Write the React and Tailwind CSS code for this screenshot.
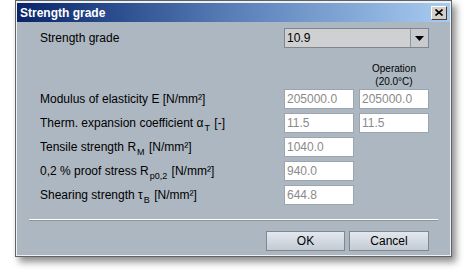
import React from "react";

const font = { fontFamily: '"Liberation Sans", Arial, sans-serif' };

function Field({ value }) {
  return (
    <div className="h-[20px] w-[70px] bg-white border border-[#9ca4ad] flex items-center pl-[2px] text-[12px] text-[#8a8a8a]">
      {value}
    </div>
  );
}

function Row({ label, values }) {
  return (
    <div className="flex items-center h-[20px]">
      <div className="w-[267px] pl-[23px] text-[12px] text-black whitespace-nowrap">{label}</div>
      <div className="flex gap-[5px]">
        {values.map((v, i) => (
          <Field key={i} value={v} />
        ))}
      </div>
    </div>
  );
}

const Sub = ({ children }) => (
  <span className="text-[9px] relative top-[4px] mx-[1px]">{children}</span>
);

export default function App() {
  return (
    <div className="w-[468px] h-[273px] bg-white relative overflow-hidden" style={font}>
      <div className="ml-[15px] w-[437px] h-[257px] border border-[#5f6368] bg-[#eef0f3] p-[1px] shadow-[4px_5px_7px_rgba(0,0,0,0.45)] flex flex-col">
        <div className="mt-[1px] h-[19px] bg-gradient-to-r from-[#0a246a] via-[#5a7fb8] to-[#a8ccf0] flex items-center justify-between pl-[3px] pr-[3px]">
          <span className="text-white font-bold text-[12px]">Strength grade</span>
          <div className="w-[16px] h-[14px] bg-[#d4d0c8] border border-t-white border-l-white border-r-[#404040] border-b-[#404040] flex items-center justify-center">
            <svg width="8" height="7" viewBox="0 0 8 7">
              <path d="M0.5 0.5 L7.5 6.5 M7.5 0.5 L0.5 6.5" stroke="black" strokeWidth="1.6" />
            </svg>
          </div>
        </div>
        <div className="flex-1 bg-[#adb7c1] flex flex-col pt-[6px]">
          <div className="flex items-center h-[20px]">
            <div className="w-[267px] pl-[23px] text-[12px] text-black">Strength grade</div>
            <div className="w-[145px] h-[20px] border border-[#7e8790] bg-[#cfd0d1] flex">
              <div className="flex-1 flex items-center pl-[2px] text-[12px] text-black">10.9</div>
              <div className="w-[18px] border-l border-[#8e969e] bg-[#c8cbce] flex items-center justify-center">
                <svg width="9" height="5" viewBox="0 0 9 5">
                  <path d="M0 0 H9 L4.5 5 Z" fill="black" />
                </svg>
              </div>
            </div>
          </div>
          <div className="h-[41px] flex">
            <div className="w-[342px]" />
            <div className="w-[70px] flex flex-col justify-end items-center text-[10px] leading-[13px] text-black pb-[1px]">
              <div>Operation</div>
              <div>(20.0°C)</div>
            </div>
          </div>
          <div className="flex flex-col gap-[4px]">
            <Row label="Modulus of elasticity E [N/mm²]" values={["205000.0", "205000.0"]} />
            <Row
              label={<>Therm. expansion coefficient α<Sub>T</Sub> [-]</>}
              values={["11.5", "11.5"]}
            />
            <Row label={<>Tensile strength R<Sub>M</Sub> [N/mm²]</>} values={["1040.0"]} />
            <Row label={<>0,2 % proof stress R<Sub>p0,2</Sub> [N/mm²]</>} values={["940.0"]} />
            <Row label={<>Shearing strength τ<Sub>B</Sub> [N/mm²]</>} values={["644.8"]} />
          </div>
          <div className="mt-[14px] mx-[12px] border-t border-t-white border-b border-b-[#8c949c]" />
          <div className="mt-[10px] flex justify-end gap-[4px] pr-[21px]">
            <button className="w-[79px] h-[20px] border border-[#7f8891] bg-gradient-to-b from-[#e3e8ee] to-[#c3cbd4] text-[12px] text-black">
              OK
            </button>
            <button className="w-[80px] h-[20px] border border-[#7f8891] bg-gradient-to-b from-[#e3e8ee] to-[#c3cbd4] text-[12px] text-black">
              Cancel
            </button>
          </div>
        </div>
      </div>
    </div>
  );
}
